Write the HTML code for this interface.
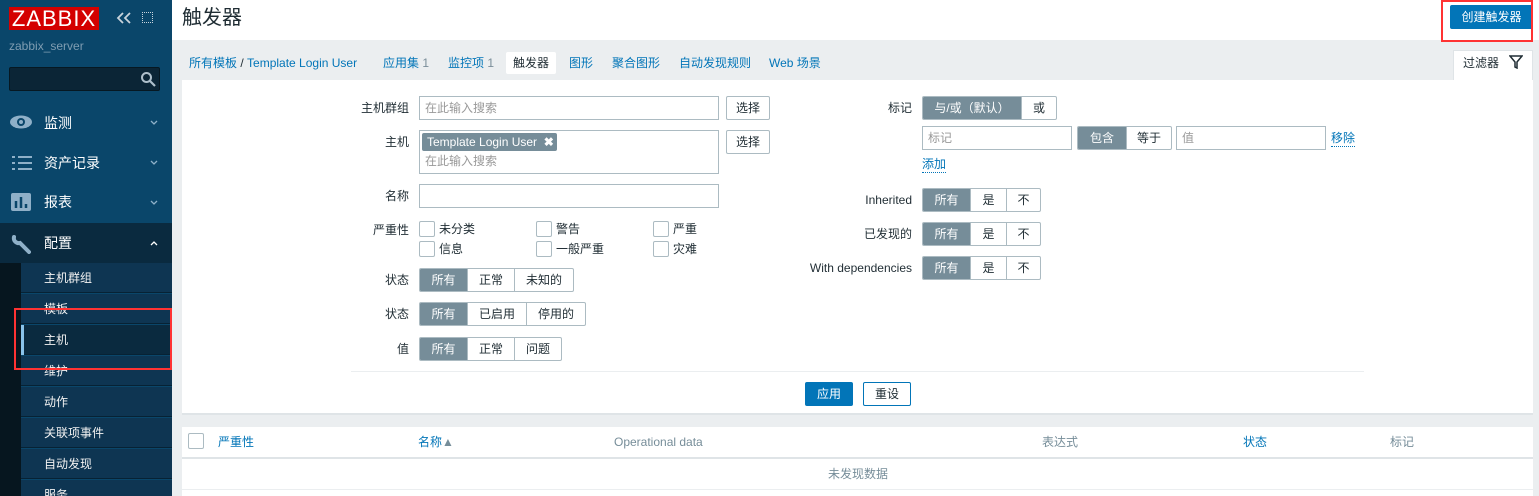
<!DOCTYPE html>
<html><head><meta charset="utf-8"><style>
*{box-sizing:border-box;margin:0;padding:0}
html,body{width:1539px;height:496px;overflow:hidden}
body{background:#ebeef0;font-family:"Liberation Sans","Noto Sans CJK SC",sans-serif;font-size:12px;line-height:16px;color:#1f2c33;position:relative}
.a{position:absolute}
.sb{left:0;top:0;width:172px;height:496px;background:#0a466a}
.mi{left:0;width:172px;height:40px;color:#fff;font-size:14px;line-height:40px;padding-left:44px}
.sub{left:21px;width:151px;height:30px;line-height:30px;color:#f2f2f2;font-size:12px;padding-left:23px;background:#0e3552;border-bottom:1px solid #072234}
.lbl{text-align:right;width:200px;line-height:24px}
.inp{border:1px solid #acbbc2;background:#fff;height:24px;line-height:22px;padding-left:5px;color:#999}
.btn{border:1px solid #acbbc2;background:#fff;height:24px;line-height:22px;text-align:center;border-radius:2px}
.seg{height:24px;display:flex;border:1px solid #acbbc2;border-radius:2px;overflow:hidden;background:#fff}
.seg span{display:block;text-align:center;line-height:22px;border-left:1px solid #acbbc2}
.seg span:first-child{border-left:none;background:#768d99;color:#fff}
.cb{width:16px;height:16px;border:1px solid #acbbc2;border-radius:2px;background:#fff}
.lnk{color:#0275b8}
.nav{top:55px;color:#0275b8;font-size:12px}
.chev{left:150px}
</style></head><body>
<div class="a sb"></div>
<div class="a" style="left:9px;top:7px;width:90px;height:23px;background:#d40000;color:#fff;font-size:22px;line-height:23px;text-align:center;letter-spacing:1px">ZABBIX</div>
<svg class="a" style="left:116px;top:12px" width="16" height="12"><path d="M7 1L2 6L7 11M14 1L9 6L14 11" stroke="#c8d4dc" stroke-width="1.8" fill="none"/></svg>
<div class="a" style="left:142px;top:12px;width:11px;height:11px;border:1px dotted #c8d4dc"></div>
<div class="a" style="left:9px;top:38px;color:#7f9db2;font-size:12px">zabbix_server</div>
<div class="a" style="left:9px;top:67px;width:151px;height:24px;background:#0b2536;border:1px solid #061822;border-radius:2px"></div>
<svg class="a" style="left:140px;top:71px" width="16" height="16"><circle cx="6.5" cy="6.5" r="4.5" stroke="#aebfcb" stroke-width="2" fill="none"/><path d="M10 10L15 15" stroke="#aebfcb" stroke-width="2.2"/></svg>
<div class="a mi" style="top:103px">监测</div>
<svg class="a" style="left:9px;top:115px" width="24" height="14"><ellipse cx="12" cy="7" rx="11" ry="6.5" fill="#8fb0c8"/><circle cx="12" cy="7" r="4" fill="#0a466a"/><circle cx="12" cy="7" r="2" fill="#8fb0c8"/></svg>
<div class="a mi" style="top:143px">资产记录</div>
<svg class="a" style="left:12px;top:156px" width="20" height="14"><path d="M0 1h3M6 1h14M0 7h3M6 7h14M0 13h3M6 13h14" stroke="#8fb0c8" stroke-width="2"/></svg>
<div class="a mi" style="top:182px">报表</div>
<svg class="a" style="left:11px;top:193px" width="20" height="18"><rect width="20" height="18" rx="2" fill="#8fb0c8"/><path d="M5 15V8M10 15V4M15 15V11" stroke="#0a466a" stroke-width="2.5"/></svg>
<div class="a mi" style="top:223px;background:#0a2a3f;height:40px">配置</div>
<svg class="a" style="left:11px;top:234px" width="20" height="20"><path d="M3 3a5 5 0 0 0 6 6l9 9" stroke="#8fb0c8" stroke-width="4" fill="none" stroke-linecap="round"/></svg>
<svg class="a chev" style="top:120px" width="8" height="6"><path d="M1 1L4 4L7 1" stroke="#8fb0c8" fill="none" stroke-width="1.3"/></svg>
<svg class="a chev" style="top:160px" width="8" height="6"><path d="M1 1L4 4L7 1" stroke="#8fb0c8" fill="none" stroke-width="1.3"/></svg>
<svg class="a chev" style="top:200px" width="8" height="6"><path d="M1 1L4 4L7 1" stroke="#8fb0c8" fill="none" stroke-width="1.3"/></svg>
<svg class="a chev" style="top:240px" width="8" height="6"><path d="M1 5L4 2L7 5" stroke="#fff" fill="none" stroke-width="1.3"/></svg>
<div class="a" style="left:0;top:263px;width:21px;height:233px;background:#06161f"></div>
<div class="a sub" style="top:263px">主机群组</div>
<div class="a sub" style="top:294px">模板</div>
<div class="a sub" style="top:325px;background:#0a2a3f">主机</div>
<div class="a" style="left:21px;top:325px;width:3px;height:30px;background:#8ac3ea"></div>
<div class="a sub" style="top:356px">维护</div>
<div class="a sub" style="top:387px">动作</div>
<div class="a sub" style="top:418px">关联项事件</div>
<div class="a sub" style="top:449px">自动发现</div>
<div class="a sub" style="top:480px">服务</div>
<div class="a" style="left:14px;top:308px;width:158px;height:62px;border:2px solid #f33"></div>

<div class="a" style="left:172px;top:0;width:1367px;height:40px;background:#fff"></div>
<div class="a" style="left:182px;top:6px;font-size:20px;line-height:24px">触发器</div>
<div class="a" style="left:1450px;top:5px;width:83px;height:24px;background:#0275b8;color:#fff;border-radius:2px;text-align:center;line-height:24px">创建触发器</div>
<div class="a" style="left:1441px;top:0;width:92px;height:42px;border:2px solid #f33"></div>

<div class="a nav" style="left:189px">所有模板 <span style="color:#1f2c33">/</span> Template Login User</div>
<div class="a nav" style="left:383px">应用集 <span style="color:#7a8d99">1</span></div>
<div class="a nav" style="left:448px">监控项 <span style="color:#7a8d99">1</span></div>
<div class="a" style="left:506px;top:52px;width:50px;height:22px;background:#fff;border-radius:2px"></div>
<div class="a nav" style="left:513px;color:#1f2c33">触发器</div>
<div class="a nav" style="left:569px">图形</div>
<div class="a nav" style="left:612px">聚合图形</div>
<div class="a nav" style="left:679px">自动发现规则</div>
<div class="a nav" style="left:769px">Web 场景</div>
<div class="a" style="left:1453px;top:50px;width:80px;height:32px;background:#fff;border:1px solid #dfe4e7;border-bottom:none"></div>
<div class="a" style="left:1463px;top:55px">过滤器</div>
<svg class="a" style="left:1509px;top:55px" width="14" height="14"><path d="M1 1H13L8 7V13L6 12V7Z" fill="none" stroke="#1f2c33" stroke-width="1.5"/></svg>

<div class="a" style="left:182px;top:80px;width:1351px;height:335px;background:#fff;border-bottom:2px solid #dfe4e7"></div>
<div class="a lbl" style="left:209px;top:96px">主机群组</div>
<div class="a inp" style="left:419px;top:96px;width:300px">在此输入搜索</div>
<div class="a btn" style="left:726px;top:96px;width:44px">选择</div>
<div class="a lbl" style="left:209px;top:130px">主机</div>
<div class="a inp" style="left:419px;top:130px;width:300px;height:44px"></div>
<div class="a" style="left:422px;top:133px;width:135px;height:18px;background:#768d99;color:#fff;border-radius:2px;line-height:18px;padding-left:5px">Template Login User &nbsp;<b>✖</b></div>
<div class="a" style="left:425px;top:153px;color:#999">在此输入搜索</div>
<div class="a btn" style="left:726px;top:130px;width:44px">选择</div>
<div class="a lbl" style="left:209px;top:184px">名称</div>
<div class="a inp" style="left:419px;top:184px;width:300px"></div>
<div class="a lbl" style="left:209px;top:218px">严重性</div>
<div class="a cb" style="left:419px;top:221px"></div><div class="a" style="left:439px;top:221px">未分类</div>
<div class="a cb" style="left:536px;top:221px"></div><div class="a" style="left:556px;top:221px">警告</div>
<div class="a cb" style="left:653px;top:221px"></div><div class="a" style="left:673px;top:221px">严重</div>
<div class="a cb" style="left:419px;top:241px"></div><div class="a" style="left:439px;top:241px">信息</div>
<div class="a cb" style="left:536px;top:241px"></div><div class="a" style="left:556px;top:241px">一般严重</div>
<div class="a cb" style="left:653px;top:241px"></div><div class="a" style="left:673px;top:241px">灾难</div>
<div class="a lbl" style="left:209px;top:268px">状态</div>
<div class="a seg" style="left:419px;top:268px"><span style="width:47px">所有</span><span style="width:47px">正常</span><span style="width:59px">未知的</span></div>
<div class="a lbl" style="left:209px;top:302px">状态</div>
<div class="a seg" style="left:419px;top:302px"><span style="width:47px">所有</span><span style="width:59px">已启用</span><span style="width:59px">停用的</span></div>
<div class="a lbl" style="left:209px;top:337px">值</div>
<div class="a seg" style="left:419px;top:337px"><span style="width:47px">所有</span><span style="width:47px">正常</span><span style="width:47px">问题</span></div>

<div class="a lbl" style="left:712px;top:96px">标记</div>
<div class="a seg" style="left:922px;top:96px"><span style="width:98px">与/或（默认）</span><span style="width:35px">或</span></div>
<div class="a inp" style="left:922px;top:126px;width:150px">标记</div>
<div class="a seg" style="left:1077px;top:126px"><span style="width:48px">包含</span><span style="width:45px">等于</span></div>
<div class="a inp" style="left:1176px;top:126px;width:150px">值</div>
<div class="a lnk" style="left:1331px;top:130px;border-bottom:1px dotted #0275b8">移除</div>
<div class="a lnk" style="left:922px;top:156px;border-bottom:1px dotted #0275b8">添加</div>
<div class="a lbl" style="left:712px;top:188px">Inherited</div>
<div class="a seg" style="left:922px;top:188px"><span style="width:47px">所有</span><span style="width:36px">是</span><span style="width:34px">不</span></div>
<div class="a lbl" style="left:712px;top:222px">已发现的</div>
<div class="a seg" style="left:922px;top:222px"><span style="width:47px">所有</span><span style="width:36px">是</span><span style="width:34px">不</span></div>
<div class="a lbl" style="left:712px;top:256px">With dependencies</div>
<div class="a seg" style="left:922px;top:256px"><span style="width:47px">所有</span><span style="width:36px">是</span><span style="width:34px">不</span></div>
<div class="a" style="left:351px;top:371px;width:1013px;height:1px;background:#ebeef0"></div>
<div class="a" style="left:805px;top:382px;width:48px;height:24px;background:#0275b8;color:#fff;text-align:center;line-height:24px;border-radius:2px">应用</div>
<div class="a btn" style="left:863px;top:382px;width:48px;border-color:#0275b8">重设</div>

<div class="a" style="left:182px;top:427px;width:1351px;height:69px;background:#fff"></div>
<div class="a" style="left:182px;top:457px;width:1351px;height:2px;background:#dfe4e7"></div>
<div class="a" style="left:182px;top:489px;width:1351px;height:1px;background:#ebeef0"></div>
<div class="a cb" style="left:188px;top:433px"></div>
<div class="a lnk" style="left:218px;top:434px">严重性</div>
<div class="a lnk" style="left:418px;top:434px">名称<span style="color:#768d99">▲</span></div>
<div class="a" style="left:614px;top:434px;color:#768d99">Operational data</div>
<div class="a" style="left:1042px;top:434px;color:#768d99">表达式</div>
<div class="a lnk" style="left:1243px;top:434px">状态</div>
<div class="a" style="left:1390px;top:434px;color:#768d99">标记</div>
<div class="a" style="left:828px;top:466px;color:#768d99">未发现数据</div>
</body></html>
